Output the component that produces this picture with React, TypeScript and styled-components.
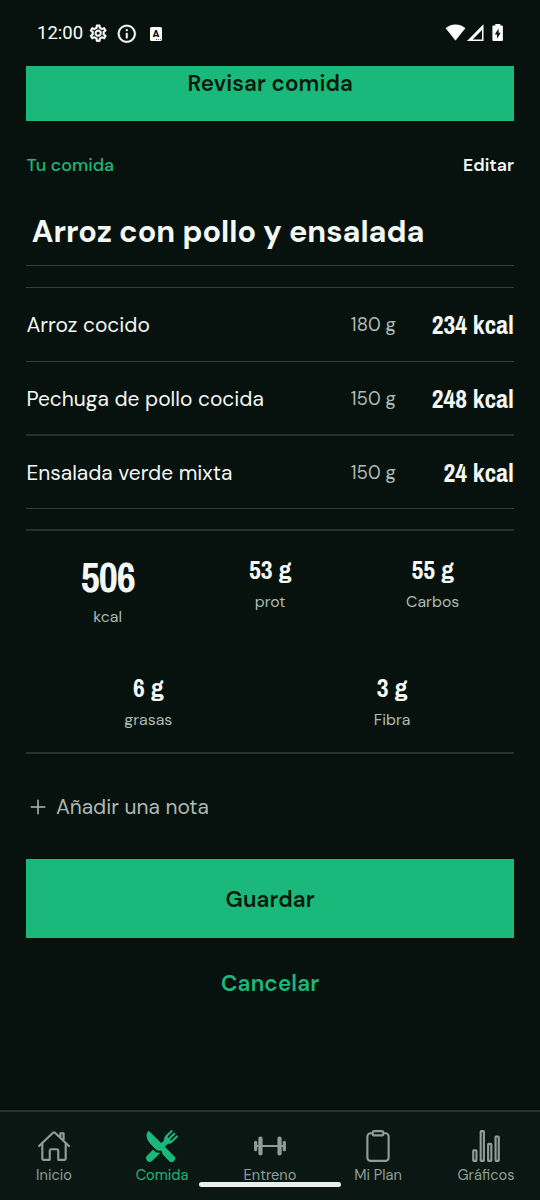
import React from 'react';
import styled, { createGlobalStyle } from 'styled-components';
import {
  IoAdd,
  IoBarbellOutline,
  IoClipboardOutline,
  IoHomeOutline,
  IoRestaurant,
  IoStatsChartOutline,
} from 'react-icons/io5';
import { MdInfoOutline, MdOutlineSettings } from 'react-icons/md';

const color = {
  bg: '#07110d',
  bar: '#0b1713',
  green: '#1ab97b',
  onGreen: '#041a0c',
  text: '#f3f8f5',
  muted: '#aebab4',
  tab: '#8f9f97',
  line: '#33403a',
  lineSoft: '#25312c',
};
const sans = `'DM Sans', Inter, sans-serif`;
const narrow = `'Archivo Narrow', 'Roboto Condensed', 'Liberation Sans', sans-serif`;

const GlobalStyle = createGlobalStyle`
  * { box-sizing: border-box; }
  body { margin: 0; background: ${color.bg}; }
  button { border: 0; padding: 0; background: none; font: inherit; color: inherit; }
`;

const Screen = styled.div`
  display: flex;
  flex-direction: column;
  width: 540px;
  height: 1200px;
  overflow: hidden;
  background: ${color.bg};
  color: ${color.text};
  font-family: ${sans};
`;

const StatusBar = styled.header`
  flex: none;
  display: flex;
  align-items: center;
  justify-content: space-between;
  height: 66px;
  padding: 0 35px 0 37px;
  color: #fff;
`;

const StatusGroup = styled.div`
  display: flex;
  align-items: center;
`;

const Clock = styled.span`
  width: 51px;
  font: 400 18.5px/24px Roboto, sans-serif;
`;

const SettingsIcon = styled(MdOutlineSettings)`
  path:not([fill='none']) {
    stroke: currentColor;
    stroke-width: 0.5px;
  }
`;

const InfoIcon = styled(MdInfoOutline)`
  margin: 1px 12px 0 8px;

  path:not([fill='none']) {
    stroke: currentColor;
    stroke-width: 0.3px;
  }
`;

const LetterBadge = styled.span`
  position: relative;
  display: flex;
  justify-content: center;
  width: 12px;
  height: 14px;
  margin-top: 1px;
  border-radius: 1.5px;
  background: #fff;
  color: ${color.bg};
  font: 900 9.5px/13px Roboto, sans-serif;

  &::after {
    content: '';
    position: absolute;
    right: 1px;
    bottom: 1px;
    width: 5px;
    border-bottom: 1px dotted #55605b;
  }
`;

const Content = styled.main`
  flex: 1;
  display: flex;
  flex-direction: column;
  min-height: 0;
  padding: 0 26px 0 26.4px;
`;

const PrimaryButton = styled.button<{ $clipped?: boolean }>`
  flex: none;
  height: ${(p) => (p.$clipped ? 55 : 79)}px;
  padding-top: ${(p) => (p.$clipped ? 0 : 1)}px;
  padding-bottom: ${(p) => (p.$clipped ? 21 : 0)}px;
  background: ${color.green};
  color: ${color.onGreen};
  font-size: 22.3px;
  font-weight: 600;
  letter-spacing: 0.15px;
`;

const SectionHead = styled.div`
  display: flex;
  justify-content: space-between;
  margin-top: 32px;
  line-height: 24px;
`;

const SectionLabel = styled.span`
  color: ${color.green};
  font-size: 17.9px;
  font-weight: 500;
`;

const EditButton = styled.button`
  font-size: 17.7px;
  font-weight: 600;
`;

const MealTitle = styled.h1`
  height: 89px;
  margin: 0;
  padding: 35px 0 0 5.4px;
  border-bottom: 1px solid ${color.line};
  font-size: 30.6px;
  font-weight: 700;
  line-height: 40px;
`;

const FoodList = styled.ul`
  margin: 21px 0 0;
  padding: 0;
  list-style: none;
  border-top: 1px solid ${color.line};
`;

const FoodName = styled.span`
  flex: 1;
  font-size: 20.95px;
`;

const FoodRow = styled.li<{ $soft?: boolean }>`
  display: flex;
  align-items: center;
  height: 74px;
  border-bottom: ${(p) => (p.$soft ? `2px solid ${color.lineSoft}` : `1px solid ${color.line}`)};

  &:last-child {
    height: 73px;
  }

  ${FoodName} {
    padding-top: ${(p) => (p.$soft ? 1 : 0)}px;
  }
`;

const Grams = styled.span`
  padding-top: 1.5px;
  color: ${color.muted};
  font-size: 18.6px;
`;

const Energy = styled.span`
  width: 118px;
  padding-top: 1px;
  text-align: right;
  font: 700 25.8px/32px ${narrow};
`;

const Totals = styled.section`
  display: flex;
  flex-wrap: wrap;
  align-content: flex-start;
  row-gap: 41px;
  height: 225px;
  margin-top: 20px;
  padding-top: 20px;
  border-top: 2px solid ${color.lineSoft};
  border-bottom: 2px solid ${color.lineSoft};
`;

const Total = styled.div<{ $share: string }>`
  width: ${(p) => p.$share};
  display: flex;
  flex-direction: column;
  align-items: center;
  gap: 3px;
`;

const TotalValue = styled.span<{ $large?: boolean }>`
  font: 700 ${(p) => (p.$large ? '41.7px/52px' : '25.9px/37px')} ${narrow};
  letter-spacing: ${(p) => (p.$large ? '-1px' : '0')};
`;

const TotalLabel = styled.span`
  color: ${color.muted};
  font-size: 15.9px;
  line-height: 22px;
`;

const NoteButton = styled.button`
  display: flex;
  align-items: center;
  gap: 5.5px;
  height: 105px;
  color: ${color.muted};
  font-size: 20.9px;
`;

const CancelButton = styled.button`
  height: 90px;
  color: ${color.green};
  font-size: 22.4px;
  font-weight: 600;
  letter-spacing: 0.2px;
`;

const TabBar = styled.nav`
  position: relative;
  flex: none;
  display: flex;
  height: 90px;
  padding-top: 17px;
  border-top: 2px solid ${color.lineSoft};
  background: ${color.bar};
`;

const Tab = styled.div<{ $active?: boolean }>`
  flex: 1;
  display: flex;
  flex-direction: column;
  align-items: center;
  gap: 3px;
  color: ${(p) => (p.$active ? color.green : color.tab)};
  font-size: 14.6px;
  line-height: 20px;
`;

const HomeIndicator = styled.div`
  position: absolute;
  left: 199px;
  bottom: 13px;
  width: 142px;
  height: 5px;
  border-radius: 3px;
  background: #eaefec;
`;

const foods = [
  { name: 'Arroz cocido', grams: '180 g', energy: '234 kcal' },
  { name: 'Pechuga de pollo cocida', grams: '150 g', energy: '248 kcal', soft: true },
  { name: 'Ensalada verde mixta', grams: '150 g', energy: '24 kcal' },
];

const totals = [
  { value: '506', label: 'kcal', share: '33.33%', large: true },
  { value: '53 g', label: 'prot', share: '33.33%' },
  { value: '55 g', label: 'Carbos', share: '33.33%' },
  { value: '6 g', label: 'grasas', share: '50%' },
  { value: '3 g', label: 'Fibra', share: '50%' },
];

const tabs = [
  { label: 'Inicio', Icon: IoHomeOutline },
  { label: 'Comida', Icon: IoRestaurant, active: true },
  { label: 'Entreno', Icon: IoBarbellOutline },
  { label: 'Mi Plan', Icon: IoClipboardOutline },
  { label: 'Gráficos', Icon: IoStatsChartOutline },
];

const RadioIcons = () => (
  <svg width="60" height="20" viewBox="0 0 60 20" fill="#fff">
    <path
      d="M1 5.200C6.400.7 14.600.7 20 5.200L10.500 17.200Z"
      stroke="#fff"
      strokeWidth=".6"
      strokeLinejoin="round"
    />
    <path d="M22 18 38.500 1.300V18ZM27.600 16.400H37V7Z" fillRule="evenodd" />
    <path
      d="M50.300 1h5v1.600h1.600q1 0 1 1V17q0 1-1 1h-8.500q-1 0-1-1V3.600q0-1 1-1h1.900ZM53.600 5.600 49.800 11.400h2.200v4.400l3.700-6h-2.100Z"
      fillRule="evenodd"
    />
  </svg>
);

export default function App() {
  return (
    <Screen>
      <GlobalStyle />
      <StatusBar>
        <StatusGroup>
          <Clock>12:00</Clock>
          <SettingsIcon size={20.4} />
          <InfoIcon size={21.6} />
          <LetterBadge>A</LetterBadge>
        </StatusGroup>
        <RadioIcons />
      </StatusBar>
      <Content>
        <PrimaryButton $clipped>Revisar comida</PrimaryButton>
        <SectionHead>
          <SectionLabel>Tu comida</SectionLabel>
          <EditButton>Editar</EditButton>
        </SectionHead>
        <MealTitle>Arroz con pollo y ensalada</MealTitle>
        <FoodList>
          {foods.map((f) => (
            <FoodRow key={f.name} $soft={f.soft}>
              <FoodName>{f.name}</FoodName>
              <Grams>{f.grams}</Grams>
              <Energy>{f.energy}</Energy>
            </FoodRow>
          ))}
        </FoodList>
        <Totals>
          {totals.map((t) => (
            <Total key={t.label} $share={t.share}>
              <TotalValue $large={t.large}>{t.value}</TotalValue>
              <TotalLabel>{t.label}</TotalLabel>
            </Total>
          ))}
        </Totals>
        <NoteButton>
          <IoAdd size={24} />
          Añadir una nota
        </NoteButton>
        <PrimaryButton>Guardar</PrimaryButton>
        <CancelButton>Cancelar</CancelButton>
      </Content>
      <TabBar>
        {tabs.map(({ label, Icon, active }) => (
          <Tab key={label} $active={active}>
            <Icon size={34} />
            {label}
          </Tab>
        ))}
        <HomeIndicator />
      </TabBar>
    </Screen>
  );
}
